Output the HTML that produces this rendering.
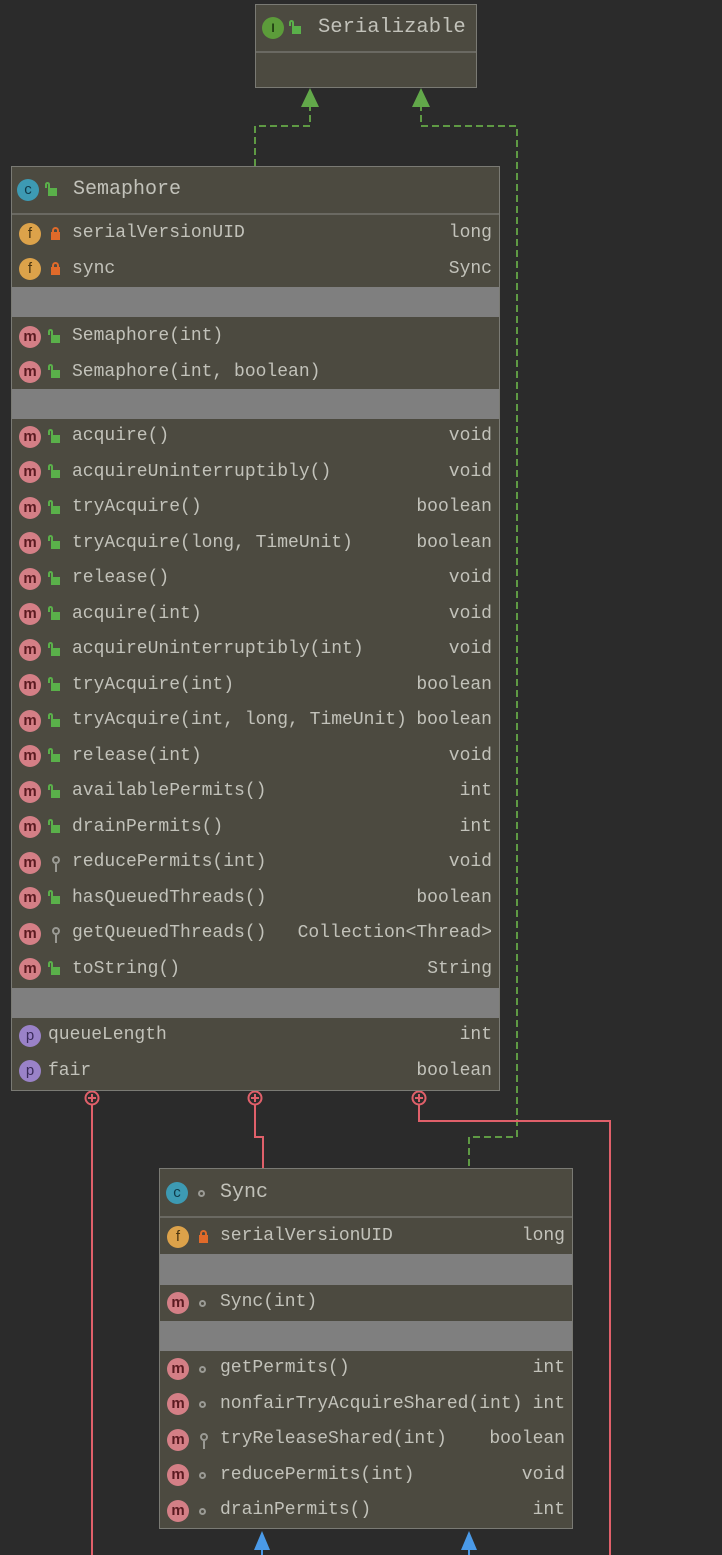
<!DOCTYPE html>
<html><head><meta charset="utf-8">
<style>
html,body{margin:0;padding:0;background:#2b2b2b;}
body{width:722px;height:1555px;position:relative;overflow:hidden;font-family:"Liberation Mono","DejaVu Sans Mono",monospace;font-size:18px;color:#c2c2ba;}
.box{position:absolute;background:#4c4a40;border:1px solid #7a7a74;box-sizing:border-box;}
.hdr{position:absolute;left:0;right:0;top:0;border-bottom:2px solid #6a6962;}
.sep{position:absolute;left:0;right:0;background:#7f7f7f;}
.row{position:absolute;left:0;right:0;height:35.5px;line-height:35.5px;}
.row .t{position:absolute;}
.row .ty{position:absolute;}
.ic{position:absolute;width:22px;height:22px;border-radius:50%;font-style:normal;font-size:15px;line-height:22px;text-align:center;top:50%;margin-top:-11px;font-family:"Liberation Sans",sans-serif;}
.m{background:#d47f86;color:#5a1a20;font-weight:bold;}
.f{background:#dca24a;color:#4a3510;}
.c{background:#3d9ab3;color:#0f3a4a;}
.p{background:#9a82c8;color:#3a2a5a;}
.I{background:#5c9c3a;color:#1e3a10;font-weight:bold;font-size:12px;}
.pub{position:absolute;width:9px;height:8px;background:#5ab04a;top:50%;margin-top:-2px;}
.pub:before{content:"";position:absolute;left:-3px;top:-6px;width:5px;height:6px;border:2px solid #5ab04a;border-bottom:none;border-radius:4px 4px 0 0;box-sizing:border-box;}
.pri{position:absolute;width:9px;height:8px;background:#e06a2a;top:50%;margin-top:-2px;}
.pri:before{content:"";position:absolute;left:1px;top:-5px;width:7px;height:6px;border:2px solid #e06a2a;border-bottom:none;border-radius:4px 4px 0 0;box-sizing:border-box;}
.pkg{position:absolute;width:7px;height:7px;border-radius:50%;border:2px solid #9a9a94;box-sizing:border-box;top:50%;margin-top:-3px;}
.pro{position:absolute;width:8px;height:8px;border-radius:50%;border:2px solid #9a9a94;box-sizing:border-box;top:50%;margin-top:-7px;}
.pro:after{content:"";position:absolute;left:1px;top:6px;width:2px;height:8px;background:#9a9a94;}
.title{position:absolute;top:11px;font-size:20px;}
</style></head><body>

<svg width="722" height="1555" style="position:absolute;left:0;top:0" xmlns="http://www.w3.org/2000/svg">
<g fill="none" stroke="#5f9a44" stroke-width="2" stroke-dasharray="7,4">
<path d="M310 104 V126 H255 V166"/>
<path d="M421 104 V126 H517 V1137 H469 V1168"/>
</g>
<polygon points="310,88 301,107 319,107" fill="#62a84a"/>
<polygon points="421,88 412,107 430,107" fill="#62a84a"/>
<g fill="none" stroke="#e0606a" stroke-width="2">
<path d="M92 1105 V1555"/>
<path d="M255 1105 V1137 H263 V1168"/>
<path d="M419 1105 V1121 H610 V1555"/>
<circle cx="92" cy="1098" r="6.5"/><path d="M88 1098 H96 M92 1094 V1102"/>
<circle cx="255" cy="1098" r="6.5"/><path d="M251 1098 H259 M255 1094 V1102"/>
<circle cx="419" cy="1098" r="6.5"/><path d="M415 1098 H423 M419 1094 V1102"/>
</g>
<g stroke="#4a9ae8" stroke-width="2"><path d="M262 1545 V1555 M469 1545 V1555"/></g>
<polygon points="262,1531 254,1550 270,1550" fill="#4a9ae8"/>
<polygon points="469,1531 461,1550 477,1550" fill="#4a9ae8"/>
</svg>

<!-- Serializable -->
<div class="box" style="left:255px;top:4px;width:222px;height:84px;">
 <div class="hdr" style="height:46px;">
  <i class="ic I" style="left:6px;">I</i><b class="pub" style="left:36px;"></b>
  <span class="title" style="left:62px;font-size:20.5px;">Serializable</span>
 </div>
</div>

<!-- Semaphore -->
<div class="box" style="left:11px;top:166px;width:489px;height:925px;">
 <div class="hdr" style="height:46px;">
  <i class="ic c" style="left:5px;">c</i><b class="pub" style="left:36px;"></b>
  <span class="title" style="left:61px;">Semaphore</span>
 </div>
 <div class="row" style="top:49px"><i class="ic f" style="left:7px">f</i><b class="pri" style="left:39px"></b><span class="t" style="left:60px">serialVersionUID</span><span class="ty" style="right:7px">long</span></div>
 <div class="row" style="top:84.5px"><i class="ic f" style="left:7px">f</i><b class="pri" style="left:39px"></b><span class="t" style="left:60px">sync</span><span class="ty" style="right:7px">Sync</span></div>
 <div class="sep" style="top:120px;height:30px"></div>
 <div class="row" style="top:152px"><i class="ic m" style="left:7px">m</i><b class="pub" style="left:39px"></b><span class="t" style="left:60px">Semaphore(int)</span></div>
 <div class="row" style="top:187.5px"><i class="ic m" style="left:7px">m</i><b class="pub" style="left:39px"></b><span class="t" style="left:60px">Semaphore(int, boolean)</span></div>
 <div class="sep" style="top:222px;height:30px"></div>
 <div class="row" style="top:252px"><i class="ic m" style="left:7px">m</i><b class="pub" style="left:39px"></b><span class="t" style="left:60px">acquire()</span><span class="ty" style="right:7px">void</span></div>
 <div class="row" style="top:287.5px"><i class="ic m" style="left:7px">m</i><b class="pub" style="left:39px"></b><span class="t" style="left:60px">acquireUninterruptibly()</span><span class="ty" style="right:7px">void</span></div>
 <div class="row" style="top:323px"><i class="ic m" style="left:7px">m</i><b class="pub" style="left:39px"></b><span class="t" style="left:60px">tryAcquire()</span><span class="ty" style="right:7px">boolean</span></div>
 <div class="row" style="top:358.5px"><i class="ic m" style="left:7px">m</i><b class="pub" style="left:39px"></b><span class="t" style="left:60px">tryAcquire(long, TimeUnit)</span><span class="ty" style="right:7px">boolean</span></div>
 <div class="row" style="top:394px"><i class="ic m" style="left:7px">m</i><b class="pub" style="left:39px"></b><span class="t" style="left:60px">release()</span><span class="ty" style="right:7px">void</span></div>
 <div class="row" style="top:429.5px"><i class="ic m" style="left:7px">m</i><b class="pub" style="left:39px"></b><span class="t" style="left:60px">acquire(int)</span><span class="ty" style="right:7px">void</span></div>
 <div class="row" style="top:465px"><i class="ic m" style="left:7px">m</i><b class="pub" style="left:39px"></b><span class="t" style="left:60px">acquireUninterruptibly(int)</span><span class="ty" style="right:7px">void</span></div>
 <div class="row" style="top:500.5px"><i class="ic m" style="left:7px">m</i><b class="pub" style="left:39px"></b><span class="t" style="left:60px">tryAcquire(int)</span><span class="ty" style="right:7px">boolean</span></div>
 <div class="row" style="top:536px"><i class="ic m" style="left:7px">m</i><b class="pub" style="left:39px"></b><span class="t" style="left:60px">tryAcquire(int, long, TimeUnit)</span><span class="ty" style="right:7px">boolean</span></div>
 <div class="row" style="top:571.5px"><i class="ic m" style="left:7px">m</i><b class="pub" style="left:39px"></b><span class="t" style="left:60px">release(int)</span><span class="ty" style="right:7px">void</span></div>
 <div class="row" style="top:607px"><i class="ic m" style="left:7px">m</i><b class="pub" style="left:39px"></b><span class="t" style="left:60px">availablePermits()</span><span class="ty" style="right:7px">int</span></div>
 <div class="row" style="top:642.5px"><i class="ic m" style="left:7px">m</i><b class="pub" style="left:39px"></b><span class="t" style="left:60px">drainPermits()</span><span class="ty" style="right:7px">int</span></div>
 <div class="row" style="top:678px"><i class="ic m" style="left:7px">m</i><b class="pro" style="left:40px"></b><span class="t" style="left:60px">reducePermits(int)</span><span class="ty" style="right:7px">void</span></div>
 <div class="row" style="top:713.5px"><i class="ic m" style="left:7px">m</i><b class="pub" style="left:39px"></b><span class="t" style="left:60px">hasQueuedThreads()</span><span class="ty" style="right:7px">boolean</span></div>
 <div class="row" style="top:749px"><i class="ic m" style="left:7px">m</i><b class="pro" style="left:40px"></b><span class="t" style="left:60px">getQueuedThreads()</span><span class="ty" style="right:7px">Collection&lt;Thread&gt;</span></div>
 <div class="row" style="top:784.5px"><i class="ic m" style="left:7px">m</i><b class="pub" style="left:39px"></b><span class="t" style="left:60px">toString()</span><span class="ty" style="right:7px">String</span></div>
 <div class="sep" style="top:821px;height:30px"></div>
 <div class="row" style="top:851px"><i class="ic p" style="left:7px">p</i><span class="t" style="left:36px">queueLength</span><span class="ty" style="right:7px">int</span></div>
 <div class="row" style="top:886.5px"><i class="ic p" style="left:7px">p</i><span class="t" style="left:36px">fair</span><span class="ty" style="right:7px">boolean</span></div>
</div>

<!-- Sync -->
<div class="box" style="left:159px;top:1168px;width:414px;height:361px;">
 <div class="hdr" style="height:47px;">
  <i class="ic c" style="left:6px;">c</i><b class="pkg" style="left:38px;"></b>
  <span class="title" style="left:60px;top:12px;">Sync</span>
 </div>
 <div class="row" style="top:50px"><i class="ic f" style="left:7px">f</i><b class="pri" style="left:39px"></b><span class="t" style="left:60px">serialVersionUID</span><span class="ty" style="right:7px">long</span></div>
 <div class="sep" style="top:85px;height:31px"></div>
 <div class="row" style="top:116px"><i class="ic m" style="left:7px">m</i><b class="pkg" style="left:39px"></b><span class="t" style="left:60px">Sync(int)</span></div>
 <div class="sep" style="top:152px;height:30px"></div>
 <div class="row" style="top:182px"><i class="ic m" style="left:7px">m</i><b class="pkg" style="left:39px"></b><span class="t" style="left:60px">getPermits()</span><span class="ty" style="right:7px">int</span></div>
 <div class="row" style="top:217.5px"><i class="ic m" style="left:7px">m</i><b class="pkg" style="left:39px"></b><span class="t" style="left:60px">nonfairTryAcquireShared(int)</span><span class="ty" style="right:7px">int</span></div>
 <div class="row" style="top:253px"><i class="ic m" style="left:7px">m</i><b class="pro" style="left:40px"></b><span class="t" style="left:60px">tryReleaseShared(int)</span><span class="ty" style="right:7px">boolean</span></div>
 <div class="row" style="top:288.5px"><i class="ic m" style="left:7px">m</i><b class="pkg" style="left:39px"></b><span class="t" style="left:60px">reducePermits(int)</span><span class="ty" style="right:7px">void</span></div>
 <div class="row" style="top:324px"><i class="ic m" style="left:7px">m</i><b class="pkg" style="left:39px"></b><span class="t" style="left:60px">drainPermits()</span><span class="ty" style="right:7px">int</span></div>
</div>

</body></html>
